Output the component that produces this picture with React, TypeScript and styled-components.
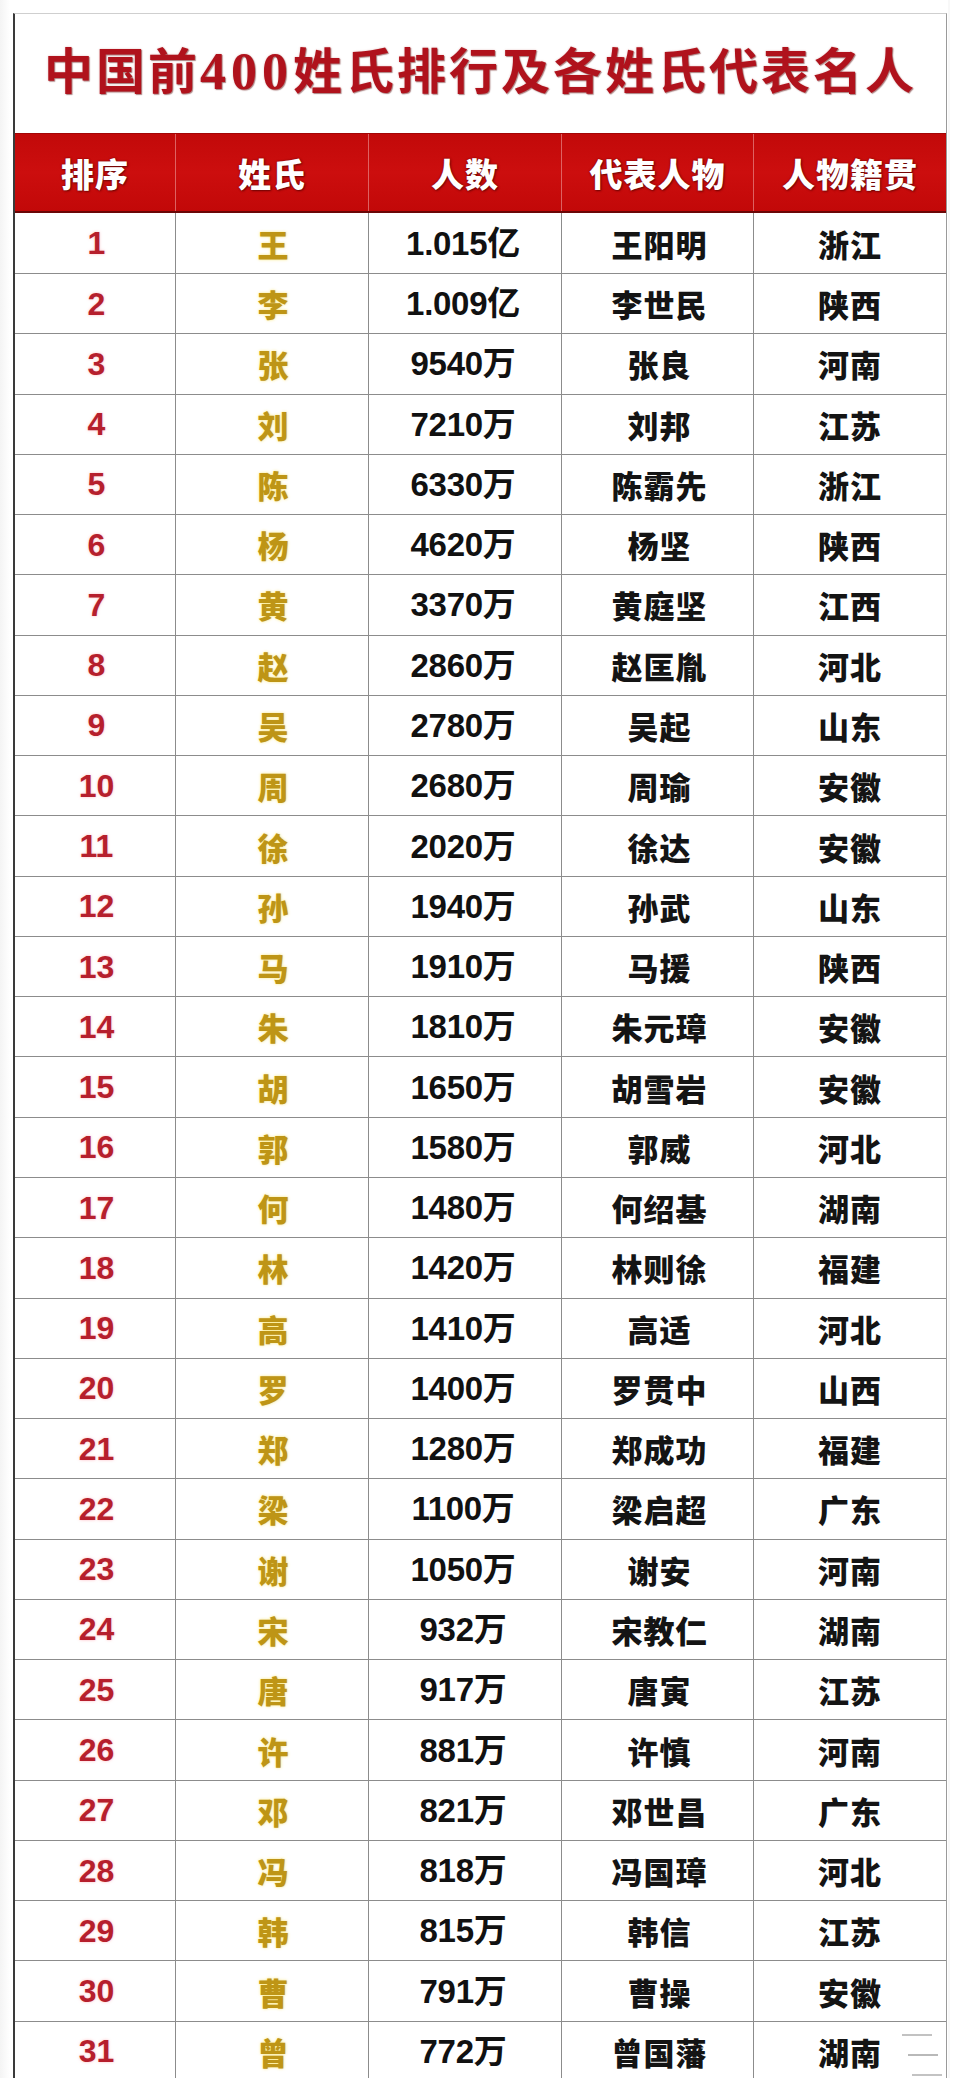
import React from "react";
import styled, { createGlobalStyle } from "styled-components";

const GlobalStyle = createGlobalStyle`
  html, body {
    margin: 0;
    padding: 0;
    background: #ffffff;
  }
  body {
    font-family: "Noto Sans CJK SC", "Noto Sans", sans-serif;
    -webkit-font-smoothing: antialiased;
  }
`;

const Page = styled.div`
  padding: 13px 13px 0 13px;
  background: linear-gradient(90deg, #f4f4f4 0, #ffffff 10px, #ffffff calc(100% - 12px), #f1f1f1 calc(100% - 11px), #ffffff calc(100% - 10px));
  min-height: 2078px;
  box-sizing: border-box;
`;

const Frame = styled.div`
  position: relative;
  width: 934px;
  box-sizing: border-box;
  border-top: 1px solid #cfcfcf;
  border-left: 2px solid #3a3a3a;
  border-right: 1.5px solid #9a9a9a;
  background: #ffffff;
`;

const TitleBox = styled.div`
  height: 119px;
  display: flex;
  align-items: center;
  justify-content: center;
  padding-bottom: 6px;
  box-sizing: border-box;
`;

const Title = styled.h1`
  margin: 0;
  font-family: "Noto Sans CJK SC", sans-serif;
  font-weight: 700;
  font-size: 49px;
  line-height: 1;
  letter-spacing: 3px;
  color: #b0121c;
  text-shadow: 1px 1px 1px rgba(80, 0, 0, 0.45), 0 0 2px rgba(160, 20, 20, 0.3);
  white-space: nowrap;
`;

const TitleDigits = styled.span`
  font-family: "Liberation Serif", serif;
  font-weight: 700;
  font-size: 52px;
  letter-spacing: 5px;
`;

const Grid = styled.div`
  display: grid;
  grid-template-columns: 161px 193px 193px 192px 1fr;
`;

const HeaderRow = styled(Grid)`
  height: 80px;
  background: linear-gradient(180deg, #c20909 0%, #cc0e0e 50%, #c20808 100%);
  border-top: 1px solid #a30606;
  border-bottom: 2px solid #6a0707;
  box-sizing: border-box;
`;

const HeaderCell = styled.div<{ $last?: boolean }>`
  display: flex;
  align-items: center;
  justify-content: center;
  border-right: ${(p) => (p.$last ? "none" : "1.5px solid rgba(240, 170, 170, 0.55)")};
  color: #ffffff;
  font-family: "Noto Sans CJK SC", sans-serif;
  font-weight: 900;
  font-size: 33px;
  letter-spacing: 1px;
  line-height: 1;
  padding-top: 2px;
  text-shadow: 0 0 2px rgba(90, 0, 0, 0.8), 1px 1px 2px rgba(40, 0, 0, 0.5);
`;

const Row = styled(Grid)<{ $first?: boolean }>`
  height: ${(p) => (p.$first ? "61px" : "60.27px")};
  border-bottom: 1.5px solid #8c8c8c;
  box-sizing: border-box;
`;

const Cell = styled.div<{ $last?: boolean }>`
  position: relative;
  display: flex;
  align-items: center;
  justify-content: center;
  border-right: ${(p) => (p.$last ? "none" : "1.5px solid #8c8c8c")};
  line-height: 1;
  white-space: nowrap;
`;

const Rank = styled(Cell)`
  font-family: "Liberation Sans", Arial, sans-serif;
  font-weight: 700;
  font-size: 32px;
  color: #b61f2d;
  text-shadow: 0 0 3px rgba(255, 160, 170, 0.7);
  padding-left: 3px;
`;

const Surname = styled(Cell)`
  font-family: "Noto Sans CJK SC", sans-serif;
  font-weight: 900;
  font-size: 31px;
  color: #be9516;
  text-shadow: 0 0 3px rgba(248, 228, 110, 0.9);
  padding-left: 2px;
`;

const Count = styled(Cell)`
  font-family: "Liberation Sans", "Noto Sans CJK SC", sans-serif;
  font-weight: 700;
  font-size: 33px;
  color: #111111;
  letter-spacing: -0.3px;
  padding-right: 4px;
`;

const Person = styled(Cell)`
  font-family: "Noto Sans CJK SC", sans-serif;
  font-weight: 900;
  font-size: 31px;
  letter-spacing: 1px;
  color: #141414;
  padding-left: 4px;
`;

const Place = styled(Cell)`
  font-family: "Noto Sans CJK SC", sans-serif;
  font-weight: 900;
  font-size: 31px;
  letter-spacing: 1px;
  color: #141414;
`;

const Watermark = styled.svg`
  position: absolute;
  right: -12px;
  bottom: -8px;
  width: 60px;
  height: 64px;
  pointer-events: none;
`;

type Entry = [string, string, string, string];

const data: Entry[] = [
  ["王", "1.015亿", "王阳明", "浙江"],
  ["李", "1.009亿", "李世民", "陕西"],
  ["张", "9540万", "张良", "河南"],
  ["刘", "7210万", "刘邦", "江苏"],
  ["陈", "6330万", "陈霸先", "浙江"],
  ["杨", "4620万", "杨坚", "陕西"],
  ["黄", "3370万", "黄庭坚", "江西"],
  ["赵", "2860万", "赵匡胤", "河北"],
  ["吴", "2780万", "吴起", "山东"],
  ["周", "2680万", "周瑜", "安徽"],
  ["徐", "2020万", "徐达", "安徽"],
  ["孙", "1940万", "孙武", "山东"],
  ["马", "1910万", "马援", "陕西"],
  ["朱", "1810万", "朱元璋", "安徽"],
  ["胡", "1650万", "胡雪岩", "安徽"],
  ["郭", "1580万", "郭威", "河北"],
  ["何", "1480万", "何绍基", "湖南"],
  ["林", "1420万", "林则徐", "福建"],
  ["高", "1410万", "高适", "河北"],
  ["罗", "1400万", "罗贯中", "山西"],
  ["郑", "1280万", "郑成功", "福建"],
  ["梁", "1100万", "梁启超", "广东"],
  ["谢", "1050万", "谢安", "河南"],
  ["宋", "932万", "宋教仁", "湖南"],
  ["唐", "917万", "唐寅", "江苏"],
  ["许", "881万", "许慎", "河南"],
  ["邓", "821万", "邓世昌", "广东"],
  ["冯", "818万", "冯国璋", "河北"],
  ["韩", "815万", "韩信", "江苏"],
  ["曹", "791万", "曹操", "安徽"],
  ["曾", "772万", "曾国藩", "湖南"],
];

const headers = ["排序", "姓氏", "人数", "代表人物", "人物籍贯"];

export default function App() {
  return (
    <>
      <GlobalStyle />
      <Page>
        <Frame>
          <TitleBox>
            <Title>
              中国前<TitleDigits>400</TitleDigits>姓氏排行及各姓氏代表名人
            </Title>
          </TitleBox>
          <HeaderRow>
            {headers.map((h, i) => (
              <HeaderCell key={h} $last={i === headers.length - 1}>
                {h}
              </HeaderCell>
            ))}
          </HeaderRow>
          {data.map(([surname, count, person, place], i) => (
            <Row key={surname} $first={i === 0}>
              <Rank>{i + 1}</Rank>
              <Surname>{surname}</Surname>
              <Count>{count}</Count>
              <Person>{person}</Person>
              <Place $last>
                {place}
                {i === data.length - 1 && (
                  <Watermark viewBox="0 0 60 64">
                    <path d="M4 10 H34" stroke="#9a9a9a" strokeWidth="1.2" fill="none" />
                    <path d="M10 30 H40" stroke="#8a8a8a" strokeWidth="1.2" fill="none" />
                    <path d="M14 50 H44" stroke="#9a9a9a" strokeWidth="1.2" fill="none" />
                  </Watermark>
                )}
              </Place>
            </Row>
          ))}
        </Frame>
      </Page>
    </>
  );
}
